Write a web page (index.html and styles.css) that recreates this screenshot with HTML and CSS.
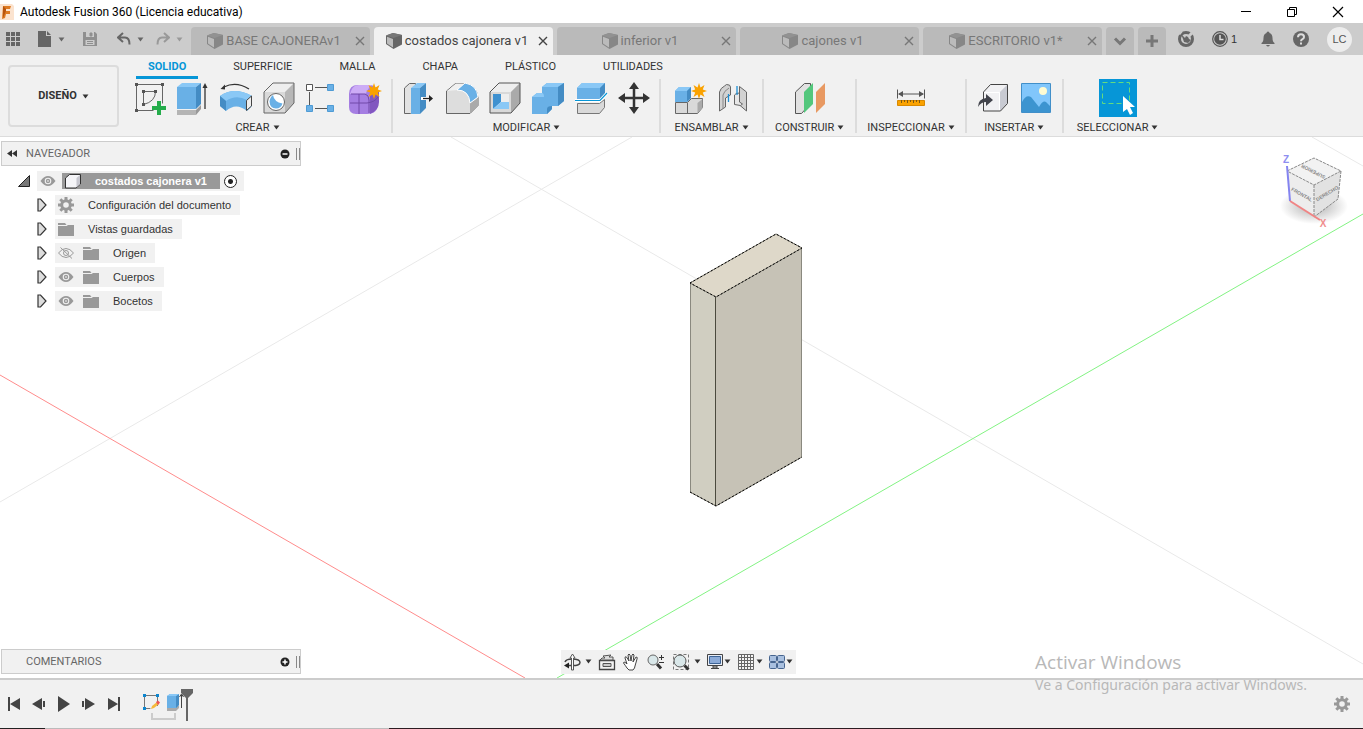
FILE: index.html
```html
<!DOCTYPE html>
<html lang="es">
<head>
<meta charset="utf-8">
<title>Autodesk Fusion 360 (Licencia educativa)</title>
<link rel="stylesheet" href="styles.css">
</head>
<body>
<svg class="defs" aria-hidden="true">
  <defs>
    <symbol id="caret" viewBox="0 0 8 6"><path d="M0.5 0.5h7L4 5.5z" fill="currentColor"/></symbol>
    <symbol id="doc" viewBox="0 0 16 16"><path d="M0 2.500L7 0l9 2v9.500L7.500 16L0 11z" fill="#666"/><path d="M0 2.500L7 0l9 2-8.500 3z" fill="#787878"/><path d="M1 3.800L7 6v8.500L1 10.500z" fill="#bcbcbc"/></symbol>
    <symbol id="close" viewBox="0 0 10 10"><path d="M1 1l8 8M9 1l-8 8" stroke="currentColor" stroke-width="1.4"/></symbol>
    <symbol id="eye" viewBox="0 0 16 12"><path d="M0.5 6Q4 1 8 1t7.500 5Q12 11 8 11T0.500 6z" fill="#999"/><circle cx="8" cy="6" r="3.300" fill="#f1f1f1"/><circle cx="8" cy="6" r="2.200" fill="#999"/><circle cx="8" cy="6" r="0.900" fill="#ddd"/></symbol>
    <symbol id="eyeoff" viewBox="0 0 16 12"><path d="M0.500 6Q4 1.500 8 1.500t7.500 4.500Q12 10.500 8 10.500T0.500 6z" fill="none" stroke="#999"/><circle cx="8" cy="6" r="2.500" fill="none" stroke="#999"/><path d="M2.500 0.500l11.500 11" stroke="#999"/></symbol>
    <symbol id="folder" viewBox="0 0 16 13"><path d="M0 0h7l1.500 2H0zM0 3h8.500l1.500-1H16v11H0z" fill="#999"/></symbol>
    <symbol id="gear" viewBox="0 0 16 16"><circle cx="8" cy="8" r="4.300" fill="none" stroke="#999" stroke-width="3"/><path d="M8 0v3.500M8 12.500V16M0 8h3.500M12.500 8H16M2.300 2.300l2.500 2.500M11.200 11.200l2.500 2.500M2.300 13.700l2.500-2.500M11.200 4.800l2.500-2.500" stroke="#999" stroke-width="3"/></symbol>
    <symbol id="expand" viewBox="0 0 10 14"><path d="M1 1h2.500L9 7l-5.500 6H1z" fill="#ddd" stroke="#333" stroke-width="1.200"/></symbol>
    <symbol id="star" viewBox="0 0 16 16"><path d="M8 0l1.500 4.500L13.500 2l-1.700 4.500L16 8l-4.200 1.500L13.500 14l-4-2.500L8 16l-1.500-4.500L2.500 14l1.700-4.500L0 8l4.200-1.500L2.500 2l4 2.500z" fill="#faa200"/></symbol>
  </defs>
</svg>

<header class="titlebar">
  <svg class="logo" viewBox="0 0 14 16"><path d="M0 0h12l2 2v14H0z" fill="#fbe3cf"/><path d="M3 2h8l-1 3H6v2h4v3H6l-1 4-3 1z" fill="#dd7a22"/><path d="M3 2l3 3v2l-3 7z" fill="#b8540d"/></svg>
  <h1>Autodesk Fusion 360 (Licencia educativa)</h1>
  <div class="window-controls">
    <button aria-label="Minimizar"><svg width="12" height="12"><path d="M1 5.500h10" stroke="#000"/></svg></button>
    <button aria-label="Restaurar"><svg width="12" height="12"><path d="M1.500 3.500h7v7h-7zM3.500 3V1.500h7v7H9" fill="none" stroke="#000"/></svg></button>
    <button aria-label="Cerrar"><svg width="12" height="12"><path d="M1 1l10 10M11 1L1 11" stroke="#000" stroke-width="1.200"/></svg></button>
  </div>
</header>

<div class="filebar">
  <div class="quick">
    <button aria-label="Panel de datos"><svg width="16" height="16"><path d="M1 1h4v4H1zM6 1h4v4H6zM11 1h4v4h-4zM1 6h4v4H1zM6 6h4v4H6zM11 6h4v4h-4zM1 11h4v4H1zM6 11h4v4H6zM11 11h4v4h-4z" fill="#666"/></svg></button>
    <button class="pair" aria-label="Archivo"><svg width="14" height="16"><path d="M0 0h8v5h5v11H0zM9 0l4 4H9z" fill="#666"/></svg><svg class="caret"><use href="#caret"/></svg></button>
    <button class="dim" aria-label="Guardar"><svg width="16" height="16"><path d="M1 1h12l2 2v12H1z" fill="#8f8f8f"/><path d="M4 1h8v5H4zM3.500 9h9v5h-9z" fill="#ccc"/><path d="M8 2h2v3H8zM5 10.500h6M5 12.500h6" fill="#8f8f8f" stroke="#8f8f8f"/></svg></button>
    <button class="pair" aria-label="Deshacer"><svg width="14" height="14"><path d="M6 1L1 5.500L6 10M1.500 5.500H8q4.500 0 4.500 7" fill="none" stroke="#666" stroke-width="2"/></svg><svg class="caret"><use href="#caret"/></svg></button>
    <button class="pair dim" aria-label="Rehacer"><svg width="14" height="14"><path d="M8 1l5 4.500L8 10M12.500 5.500H6q-4.500 0-4.500 7" fill="none" stroke="#999" stroke-width="2"/></svg><svg class="caret"><use href="#caret"/></svg></button>
  </div>
  <nav class="files" aria-label="Documentos">
    <div class="file"><a href="#"><svg class="doc"><use href="#doc"/></svg>BASE CAJONERAv1</a><button aria-label="Cerrar BASE CAJONERA"><svg class="x"><use href="#close"/></svg></button></div>
    <div class="file active"><a href="#"><svg class="doc"><use href="#doc"/></svg>costados cajonera v1</a><button aria-label="Cerrar costados cajonera"><svg class="x"><use href="#close"/></svg></button></div>
    <div class="file"><a href="#"><svg class="doc"><use href="#doc"/></svg>inferior v1</a><button aria-label="Cerrar inferior"><svg class="x"><use href="#close"/></svg></button></div>
    <div class="file"><a href="#"><svg class="doc"><use href="#doc"/></svg>cajones v1</a><button aria-label="Cerrar cajones"><svg class="x"><use href="#close"/></svg></button></div>
    <div class="file"><a href="#"><svg class="doc"><use href="#doc"/></svg>ESCRITORIO v1*</a><button aria-label="Cerrar ESCRITORIO"><svg class="x"><use href="#close"/></svg></button></div>
    <button class="tabbtn" aria-label="Más documentos"><svg width="14" height="14"><path d="M2 4.500l5 5 5-5" fill="none" stroke="#777" stroke-width="3"/></svg></button>
    <button class="tabbtn" aria-label="Nuevo diseño"><svg width="14" height="14"><path d="M7 1v12M1 7h12" stroke="#777" stroke-width="3"/></svg></button>
  </nav>
  <div class="account">
    <button aria-label="Extensiones"><svg width="16" height="16"><circle cx="8" cy="8" r="6.500" fill="#ccc" stroke="#666" stroke-width="3"/><path d="M14 2l-4 4" stroke="#ccc" stroke-width="3"/><path d="M3 3l4 4 1-2 2 1 1 2 2 1-3 3-4-1-1-3z" fill="#666"/><path d="M4 0.500L1.500 3.500" stroke="#ccc" stroke-width="1.500"/></svg></button>
    <button class="jobs"><svg width="16" height="16"><circle cx="8" cy="8" r="7.300" fill="#ccc" stroke="#555" stroke-width="1.200"/><circle cx="8" cy="8" r="5.800" fill="#555"/><path d="M8 4v4.500h3.500" fill="none" stroke="#ddd" stroke-width="1.500"/></svg>1</button>
    <button class="bell" aria-label="Notificaciones"><svg width="14" height="16"><path d="M7 0.500q1.500 0 1.500 1.500Q11.500 3 11.500 7q0 4 2 5v1h-13v-1q2-1 2-5 0-4 3-5Q5.500 0.500 7 0.500zM5 14h4q-2 3-4 0z" fill="#666"/></svg></button>
    <button aria-label="Ayuda"><svg width="16" height="16"><circle cx="8" cy="8" r="8" fill="#666"/><path d="M5 6.200q0-3 3-3t3 2.700q0 1.500-1.500 2.300T8 10.300M8 11.500v2" fill="none" stroke="#ddd" stroke-width="2"/></svg></button>
    <button class="avatar">LC</button>
  </div>
</div>

<section class="ribbon">
  <button class="workspace">DISEÑO <svg class="caret"><use href="#caret"/></svg></button>
  <div class="ribbon-main">
    <nav class="ribbon-tabs">
      <a class="current" href="#">SOLIDO</a><a href="#">SUPERFICIE</a><a href="#">MALLA</a><a href="#">CHAPA</a><a href="#">PLÁSTICO</a><a href="#">UTILIDADES</a>
    </nav>
    <div class="groups">
      <div class="group create">
        <div class="tools">
          <button aria-label="Crear boceto"><svg class="tool" viewBox="0 0 32 32"><path d="M2.500 2.500h26M2.500 2.500v26h17M28.500 2.500v19" fill="none" stroke="#666"/><path d="M9.500 9.500h12M9.500 9.500v12M21.500 9.500q0 10-12 13" fill="none" stroke="#666"/><path d="M1 1h3v3H1zM27 1h3v3h-3zM1 27h3v3H1zM8 8h3v3H8zM20 8h3v3h-3zM8 21h3v3H8z" fill="#555"/><path d="M23 19h4v5h5v4h-5v5h-4v-5h-5v-4h5z" fill="#24ac4b"/></svg></button>
          <button aria-label="Extruir"><svg class="tool" viewBox="0 0 32 32"><path d="M0 28h19l5-5v4l-5 6H0z" fill="#999"/><path d="M0 28h19v5H0z" fill="#b5b5b5"/><path d="M0 5h19v22H0z" fill="#69b0e6"/><path d="M0 5l5-4h19l-5 4z" fill="#8ac8f6"/><path d="M19 5l5-4v21l-5 5z" fill="#448cc4"/><path d="M28 27V4" stroke="#333" stroke-width="1.300"/><path d="M25.500 6L28 1l2.500 5z" fill="#333"/></svg></button>
          <button aria-label="Revolución"><svg class="tool" viewBox="0 0 32 32"><path d="M0 14Q14 4 32 14v10l-5 5Q16 20 6 29L0 24z" fill="#69b0e6"/><path d="M0 14Q14 4 32 14l-5 4Q16 12 6 19z" fill="#8ac8f6"/><path d="M0 14l6 5v10l-6-5z" fill="#448cc4"/><path d="M26.500 18.500L31.500 14v10l-5 4.500z" fill="#eee" stroke="#444"/><path d="M4 5Q16-1 29 7" fill="none" stroke="#333" stroke-width="1.300"/><path d="M0.500 7L5 2.500v5z" fill="#333"/></svg></button>
          <button aria-label="Agujero"><svg class="tool" viewBox="0 0 32 32"><path d="M1 10L10 1h21l-9 9z" fill="#eee"/><path d="M22 10l9-9v20l-9 10z" fill="#b7b7b7"/><path d="M1 10h21v21H1z" fill="#d9d9d9"/><path d="M1 10L10 1h21v20l-9 10H1z" fill="none" stroke="#666"/><circle cx="13" cy="20" r="8.500" fill="#fff" stroke="#666"/><path d="M10 13q1 7 9.500 8.500-1.500 5-6.500 5-6 0-6.500-7Q7 15 10 13z" fill="#69b0e6"/></svg></button>
          <button aria-label="Patrón rectangular"><svg class="tool" viewBox="0 0 32 32"><path d="M9 5.500h12M3.500 10v13M9 26.500h12" stroke="#555"/><path d="M0.500 2.500h6v6h-6z" fill="#fff" stroke="#555"/><path d="M21.500 2.500h6v6h-6zM0.500 23.500h6v6h-6zM21.500 23.500h6v6h-6z" fill="#69b0e6" stroke="#4f9bd4"/></svg></button>
          <button aria-label="Crear forma"><svg class="tool" viewBox="0 0 32 32"><path d="M0 12q0-9 9-9h11q8 0 9 8v10q0 11-11 11H7q-7 0-7-7z" fill="#a57ee2"/><path d="M2 9q2-6 8-6h12l-4 6q-1 3-2 3H1z" fill="#ccacf6"/><path d="M21 11l9-3v12q0 8-9 12z" fill="#8257c0"/><path d="M1 21h17q8-1 11-6M10 12v20M2 12h14q4 1 4 6v13" fill="none" stroke="#7049a8"/></svg><svg class="spark"><use href="#star"/></svg></button>
        </div>
        <button class="group-label">CREAR<svg class="caret"><use href="#caret"/></svg></button>
      </div>
      <div class="group modify">
        <div class="tools">
          <button aria-label="Pulsar/tirar"><svg class="tool" viewBox="0 0 32 32"><path d="M1.500 6l5-4.500h6v25l-5 5h-6z" fill="#e2e2e2" stroke="#666"/><path d="M8 6h9v26H8z" fill="#69b0e6"/><path d="M8 6l6-5h9l-6 5z" fill="#8ac8f6"/><path d="M17 6l6-5v25l-6 6z" fill="#448cc4"/><path d="M18 16.500h9" stroke="#fff" stroke-width="3"/><path d="M20 16.500h7" stroke="#222" stroke-width="1.300"/><path d="M26 13l4 3.500-4 3.500z" fill="#222"/></svg></button>
          <button aria-label="Empalme"><svg class="tool" viewBox="0 0 32 32"><path d="M0.500 9l9-7.500H19q12 2 13 14v8l-8 8H0.500z" fill="#ddd" stroke="#666"/><path d="M1 9l9-7.500h9L12 8z" fill="#f0f0f0"/><path d="M24 21l8-5v8l-8 7z" fill="#aaa"/><path d="M11 8l8-7q12 2 13 14l-8 6Q23 8 11 8z" fill="#69b0e6" stroke="#fff"/></svg></button>
          <button aria-label="Vaciado"><svg class="tool" viewBox="0 0 32 32"><path d="M1 10L10 1h21v20L22 31H1z" fill="#d9d9d9"/><path d="M1 10L10 1h21l-9 9z" fill="#eee"/><path d="M22 10l9-9v20L22 31z" fill="#aaa"/><path d="M1 10L10 1h21v20L22 31H1z" fill="none" stroke="#555"/><path d="M4 12h16v15H4z" fill="#eee"/><path d="M4 12h8v8l-8 7z" fill="#3f91d0"/><path d="M12 20h8v7H4z" fill="#8ac8f6"/></svg></button>
          <button aria-label="Combinar"><svg class="tool" viewBox="0 0 32 32"><path d="M0 15l5-4h5V5l5-4h17v18l-6 5h-6v3l-5 5H0z" fill="#69b0e6"/><path d="M0 15l5-4h5q2 0 2 4zM10 5l5-4h17l-6 4z" fill="#8ac8f6"/><path d="M26 5l6-4v18l-6 5zM20 24v3l-5 5v-5q0-3 5-3z" fill="#448cc4"/></svg></button>
          <button aria-label="Dividir cuerpo"><svg class="tool" viewBox="0 0 32 32"><path d="M2 6l5-5h23v11l-5 5H2z" fill="#69b0e6"/><path d="M2 6l5-5h23l-5 5z" fill="#8ac8f6"/><path d="M25 6l5-5v11l-5 5z" fill="#448cc4"/><path d="M2.500 21.500h22l5-4v8l-5 6h-22z" fill="#d9d9d9" stroke="#777"/><path d="M0 18.500h25L32 11" fill="none" stroke="#fff" stroke-width="3"/><path d="M0 18.500h25L32 11" fill="none" stroke="#0696d7" stroke-width="1.200"/></svg></button>
          <button aria-label="Desplazar/Copiar"><svg class="tool" viewBox="0 0 32 32"><path d="M16 4v24M4 16h24" stroke="#333" stroke-width="2.500"/><path d="M16 0l5 7H11zM16 32l5-7H11zM0 16l7-5v10zM32 16l-7-5v10z" fill="#333"/></svg></button>
        </div>
        <button class="group-label">MODIFICAR<svg class="caret"><use href="#caret"/></svg></button>
      </div>
      <div class="group assemble">
        <div class="tools">
          <button aria-label="Nuevo componente"><svg class="tool" viewBox="0 0 32 32"><path d="M1.500 20.500h12l4-4h11v9l-5 6h-22z" fill="#d9d9d9" stroke="#666"/><path d="M23.500 21l5-4v9l-5 5z" fill="#aaa"/><path d="M13.500 21v10" stroke="#666"/><path d="M1 9l4-4h12v11l-4 4H1z" fill="#69b0e6"/><path d="M1 9l4-4h12l-4 4z" fill="#8ac8f6"/><path d="M13 9l4-4v11l-4 4z" fill="#448cc4"/></svg><svg class="spark"><use href="#star"/></svg></button>
          <button aria-label="Unión"><svg class="tool" viewBox="0 0 32 32"><path d="M2.500 29V10q1-4 5-6l2-1.500q4 0 4 2.500v8l-5 3v9z" fill="#d2d2d2" stroke="#666"/><path d="M6 27V13q1-4 6-7" fill="none" stroke="#888"/><path d="M22.500 4.500l7 5.500v19l-7-6z" fill="#d2d2d2" stroke="#666"/><path d="M17.500 13q1-2 5-2v9l3 2-2 1.500-6-1z" fill="#e8e8e8" stroke="#666"/><path d="M11.500 12v8M20 4v9" stroke="#1d8fd4" stroke-width="1.300"/></svg></button>
        </div>
        <button class="group-label">ENSAMBLAR<svg class="caret"><use href="#caret"/></svg></button>
      </div>
      <div class="group construct">
        <div class="tools"><button aria-label="Plano de desfase"><svg class="tool" viewBox="0 0 32 32"><path d="M1.500 10l9-8.500h6v20l-9 10h-6z" fill="#e1e1e1" stroke="#555"/><path d="M10 10l9-9v21l-9 9z" fill="#53c77c"/><path d="M22 10l9-9v21l-9 9z" fill="#e89962"/></svg></button></div>
        <button class="group-label">CONSTRUIR<svg class="caret"><use href="#caret"/></svg></button>
      </div>
      <div class="group inspect">
        <div class="tools"><button aria-label="Medir"><svg class="tool" viewBox="0 0 32 32"><path d="M2.500 7.500v9M29.500 7.500v9M4 12h24" stroke="#555"/><path d="M3 12l5-3v6zM29 12l-5-3v6z" fill="#555"/><path d="M2.500 18.500h27v5h-27z" fill="#faa200" stroke="#d98900"/><path d="M6.500 18v3M9.500 18v2M12.500 18v3M15.500 18v2M18.500 18v3M21.500 18v2M24.500 18v3" stroke="#7b5712"/></svg></button></div>
        <button class="group-label">INSPECCIONAR<svg class="caret"><use href="#caret"/></svg></button>
      </div>
      <div class="group insert">
        <div class="tools">
          <button aria-label="Insertar derivado"><svg class="tool" viewBox="0 0 32 32"><path d="M6.500 10l7-7.500h17v19l-7 7.500h-17z" fill="#f1f1f3"/><path d="M23 10l7-7v19l-7 7z" fill="#c8cad2"/><path d="M6.500 10l7-7.500h17v19l-7 7.500h-17z" fill="none" stroke="#444"/><path d="M7 10.500h15.500V28" fill="none" stroke="#fff"/><path d="M1 25q0-8 8-9v-4l7 6-7 6v-4q-5 0-8 5z" fill="#42444c"/></svg></button>
          <button aria-label="Insertar imagen"><svg class="tool" viewBox="0 0 32 32"><path d="M2 2h28v28H2z" fill="#81c6fb"/><circle cx="23" cy="9" r="4" fill="#fffbd2"/><path d="M2 20q4-8 9-5l8 10q4-7 7-5l4 4v6H2z" fill="#3c94d0"/><path d="M1.500 1.500h29v29h-29z" fill="none" stroke="#418fc9"/></svg></button>
        </div>
        <button class="group-label">INSERTAR<svg class="caret"><use href="#caret"/></svg></button>
      </div>
      <div class="group select">
        <div class="tools"><button class="select-tool" aria-label="Seleccionar"><svg width="38" height="38"><path d="M3.500 3.500h27v21h-27z" fill="none" stroke="#65db7e" stroke-dasharray="5 3"/><path d="M24 17v16l4-3 3 6 3-2-3-6h5z" fill="#fff"/></svg></button></div>
        <button class="group-label">SELECCIONAR<svg class="caret"><use href="#caret"/></svg></button>
      </div>
    </div>
  </div>
</section>

<main class="canvas">
  <svg class="scene" viewBox="0 137 1363 541" preserveAspectRatio="xMidYMid slice" aria-hidden="true">
    <g stroke="#e9e9e9"><path d="M0 502L632 137M451 137L1363 664M1312 137L1363 166"/></g>
    <path d="M0 375L525 678" stroke="#ff8c8c"/>
    <path d="M557 678L1363 214" stroke="#83f383"/>
    <path d="M690 283L776 234L802 248L716 297z" fill="#ded8c9"/>
    <path d="M690 283L716 297V506L690 492z" fill="#d0cec1"/>
    <path d="M716 297L802 248V457L716 506z" fill="#c6c2b6"/>
    <path d="M690.500 283V492M801.500 248V457" stroke="#8a897f"/>
    <path d="M715.500 297V506" stroke="#4b4a3e"/>
    <g fill="none" stroke="#77756b"><path d="M690 283L776 234L802 248L716 297zM690 492L716 506L802 457"/></g>
    <g fill="none" stroke="#000" stroke-dasharray="2 2"><path d="M690 283L776 234L802 248L716 297zM690 492L716 506L802 457"/></g>
  </svg>

  <div class="canvas-top">
    <aside class="browser">
      <div class="panel-head">
        <svg width="10" height="7"><path d="M0 3.500L5 0v7zM5 3.500L10 0v7z" fill="#333"/></svg>
        <h2>NAVEGADOR</h2>
        <button aria-label="Contraer"><svg width="10" height="10"><circle cx="5" cy="5" r="4.500" fill="#222"/><path d="M2.500 5h5" stroke="#fff" stroke-width="1.500"/></svg></button>
        <span class="grip"></span>
      </div>
      <ul class="tree">
        <li class="root">
          <svg class="open" viewBox="0 0 12 12"><path d="M0.500 11.500L11.500 0.500v11z" fill="#777" stroke="#222"/></svg>
          <div class="chip">
            <svg class="eye"><use href="#eye"/></svg>
            <span class="selected"><svg width="18" height="16"><path d="M1.500 5l4-3.500h11V11L12 15H1.500z" fill="#f5f5f8" stroke="#333"/><path d="M12.500 5l3.500-3v9l-3.500 3.500z" fill="#c8c8d0"/></svg><b>costados cajonera v1</b></span>
            <input type="radio" class="activate" aria-label="Activar componente" checked>
          </div>
        </li>
        <li><svg class="arrow"><use href="#expand"/></svg><div class="chip"><svg class="gear"><use href="#gear"/></svg><span>Configuración del documento</span></div></li>
        <li><svg class="arrow"><use href="#expand"/></svg><div class="chip"><svg class="folder"><use href="#folder"/></svg><span>Vistas guardadas</span></div></li>
        <li><svg class="arrow"><use href="#expand"/></svg><div class="chip"><svg class="eye"><use href="#eyeoff"/></svg><svg class="folder"><use href="#folder"/></svg><span>Origen</span></div></li>
        <li><svg class="arrow"><use href="#expand"/></svg><div class="chip"><svg class="eye"><use href="#eye"/></svg><svg class="folder"><use href="#folder"/></svg><span>Cuerpos</span></div></li>
        <li><svg class="arrow"><use href="#expand"/></svg><div class="chip"><svg class="eye"><use href="#eye"/></svg><svg class="folder"><use href="#folder"/></svg><span>Bocetos</span></div></li>
      </ul>
    </aside>
    <svg class="viewcube" viewBox="1275 148 80 84">
      <defs><radialGradient id="shade"><stop offset="0" stop-color="#999" stop-opacity="0.800"/><stop offset="1" stop-color="#999" stop-opacity="0"/></radialGradient></defs>
      <ellipse cx="1314" cy="206" rx="34" ry="18" fill="url(#shade)"/>
      <path d="M1287 171L1314 158L1341 171L1314 185z" fill="#f2f2f2"/>
      <path d="M1287 171L1314 185V217L1290 201z" fill="#ededed"/>
      <path d="M1314 185L1341 171L1338 199L1314 217z" fill="#e2e2e2"/>
      <path d="M1287 171L1314 158L1341 171L1314 185zM1314 185V217M1341 171L1338 199L1314 217" fill="none" stroke="#888" stroke-dasharray="3 1"/>
      <path d="M1287 166L1290 201" stroke="#8484f0" stroke-width="2"/>
      <path d="M1290 201L1320 220" stroke="#f08484" stroke-width="2"/>
      <text class="face" transform="translate(1301 196) rotate(29)">FRONTAL</text>
      <text class="face" transform="translate(1328 195) rotate(-31)">DERECHO</text>
      <text class="face" transform="translate(1314 170) rotate(207)">SUPERIOR</text>
      <text class="axis z" x="1286" y="163">Z</text>
      <text class="axis x-axis" x="1323" y="227">X</text>
    </svg>
  </div>

  <div class="canvas-bottom">
    <aside class="panel-head comments">
      <h2>COMENTARIOS</h2>
      <button aria-label="Añadir comentario"><svg width="10" height="10"><circle cx="5" cy="5" r="4.500" fill="#222"/><path d="M2.500 5h5M5 2.500v5" stroke="#fff" stroke-width="1.500"/></svg></button>
      <span class="grip"></span>
    </aside>
    <div class="navbar">
      <button class="orbit" aria-label="Órbita"><svg width="18" height="18"><path d="M2 9q1-3 7-3 8 0 8 3.500T8 12.500H4" fill="none" stroke="#444" stroke-width="1.500"/><path d="M8.500 17V5H7l2.500-4L12 5h-1.500v12z" fill="#fff" stroke="#555"/><path d="M1 12.500l5-3v6z" fill="#222"/></svg><svg class="caret"><use href="#caret"/></svg></button>
      <button aria-label="Mirar a"><svg width="18" height="18"><path d="M1.500 7.500h15v9h-15z" fill="#f2f2f2" stroke="#444" stroke-width="1.300"/><path d="M2 7l2-2 3 0-2-2 8-1-2 2 4 0v3z" fill="#ddd" stroke="#555"/><path d="M5 10.500h8v3H5z" fill="#ccc" stroke="#555"/></svg></button>
      <button aria-label="Encuadre"><svg width="18" height="18"><path d="M5 15Q3 12 1.500 10q0-2 2.500 0l1 1L3 5q0-2 1.500-1L7 8 6 2q1-2 2 0l1 6 1-6q1-2 2 0l-1 7 3-5q2 0 1 2l-2 7q0 2-2 4H7z" fill="#fff" stroke="#444"/></svg></button>
      <button aria-label="Zoom"><svg width="20" height="18"><circle cx="7" cy="7" r="5" fill="#d9e7e9" stroke="#666"/><path d="M11 11l4 4.500" stroke="#333" stroke-width="3"/><path d="M13 4.500h5M15.500 2v5M13 9.500h5" stroke="#333"/></svg></button>
      <button class="fit" aria-label="Ajustar"><svg width="18" height="18"><path d="M1.500 1.500h15v15h-15z" fill="none" stroke="#777" stroke-dasharray="3 2"/><circle cx="8" cy="8" r="6" fill="#d9e7e9" stroke="#555"/><path d="M12.500 12.500l4 4" stroke="#333" stroke-width="3"/></svg><svg class="caret"><use href="#caret"/></svg></button>
      <button aria-label="Visualización"><svg width="16" height="18"><path d="M0.500 1.500h15v11h-15z" fill="#e8edf6" stroke="#444"/><path d="M2.500 3.500h11v7h-11z" fill="#8cabd8" stroke="#3d6496"/><path d="M6 13h4v2H6zM4 15.500h8" fill="#ccc" stroke="#444"/></svg><svg class="caret"><use href="#caret"/></svg></button>
      <button aria-label="Rejilla"><svg width="18" height="18"><path d="M1.500 1.500h15v15h-15zM4.500 2v15M7.500 2v15M10.500 2v15M13.500 2v15M2 4.500h15M2 7.500h15M2 10.500h15M2 13.500h15" fill="#f5f5f5" stroke="#666"/></svg><svg class="caret"><use href="#caret"/></svg></button>
      <button aria-label="Ventanas"><svg width="16" height="18"><rect x="0.500" y="2.500" width="7" height="6" rx="1"/><rect x="8.500" y="2.500" width="7" height="6" rx="1"/><rect x="0.500" y="9.500" width="7" height="6" rx="1"/><rect x="8.500" y="9.500" width="7" height="6" rx="1"/></svg><svg class="caret"><use href="#caret"/></svg></button>
    </div>
  </div>
</main>

<footer class="timeline">
  <div class="player">
    <button aria-label="Inicio"><svg width="14" height="14"><path d="M1 0h2v14H1zM13 1v12L3 7z" fill="#444"/></svg></button>
    <button aria-label="Paso atrás"><svg width="14" height="14"><path d="M10 1v12L0 7zM11 4h2v6h-2z" fill="#444"/></svg></button>
    <button aria-label="Reproducir"><svg width="14" height="16"><path d="M1 0v16l12-8z" fill="#444"/></svg></button>
    <button aria-label="Paso adelante"><svg width="14" height="14"><path d="M3 1v12l10-6zM0 4h2v6H0z" fill="#444"/></svg></button>
    <button aria-label="Final"><svg width="14" height="14"><path d="M11 0h2v14h-2zM1 1v12l10-6z" fill="#444"/></svg></button>
  </div>
  <svg class="history" viewBox="0 0 54 34" role="img" aria-label="Boceto y extrusión">
    <path d="M2.500 8.500h13v13h-13z" fill="none" stroke="#777"/><path d="M1 7h3v3H1zM14 7h3v3h-3zM1 20h3v3H1z" fill="#0d86cf"/>
    <path d="M9 19h8v4H8z" fill="#f1f1f1"/><path d="M9 22l1-3 5-4 2 2-5 4z" fill="#f5b93c"/><path d="M14 15l2-1.500 2 2L16 18z" fill="#ec5555"/>
    <path d="M25 21l3-2h9v2l-3 3h-9z" fill="#aaa"/><path d="M25 9l3-2h9v11l-3 3h-9z" fill="#69b0e6"/><path d="M34 9l3-2v11l-3 3z" fill="#448cc4"/><path d="M25 9l3-2h9l-3 2z" fill="#8ac8f6"/><path d="M39.500 21V8M37.500 10l2-3 2 3" fill="none" stroke="#444"/>
    <path d="M10 26v6h23v-6" fill="none" stroke="#ccc" stroke-width="2"/>
    <path d="M39 2h12v4l-5 5v23h-2V11l-5-5z" fill="#666"/>
  </svg>
  <button class="prefs" aria-label="Configuración"><svg class="gear"><use href="#gear"/></svg></button>
</footer>
<div class="taskbar-edge"></div>

<div class="watermark"><p class="wm-title">Activar Windows</p><p>Ve a Configuración para activar Windows.</p></div>
</body>
</html>
```
FILE: styles.css
```css
* { box-sizing: border-box; }
html, body { height: 100%; }
body {
  margin: 0;
  display: flex;
  flex-direction: column;
  position: relative;
  overflow: hidden;
  background: #fff;
  color: #333;
  font: 11px/16px "Liberation Sans", Arial, sans-serif;
}
button { margin: 0; padding: 0; border: 0; background: none; color: inherit; font: inherit; display: flex; align-items: center; justify-content: center; }
a { color: inherit; text-decoration: none; }
h1, h2, p, ul { margin: 0; padding: 0; font-weight: normal; }
ul { list-style: none; }
svg { display: block; flex: none; }
.defs { position: absolute; width: 0; height: 0; }
.caret { width: 7px; height: 5px; }

/* Window title */
.titlebar { height: 23px; display: flex; align-items: center; flex: none; }
.logo { width: 14px; height: 16px; }
.titlebar h1 { margin-left: 6px; font: 12px/16px Roboto, "Noto Sans", sans-serif; color: #000; white-space: nowrap; }
.window-controls { margin-left: auto; margin-right: 2px; display: flex; }
.window-controls button { width: 46px; height: 20px; }

/* Document tabs */
.filebar { height: 32px; flex: none; display: flex; background: #ccc; }
.quick { width: 191px; flex: none; display: flex; align-items: center; gap: 17px; padding-left: 5px; color: #666; }
.quick .pair { gap: 6px; }
.quick .dim { color: #999; }
.quick .dim + .pair { margin-left: 2px; }
.quick .pair + .pair { margin-left: -5px; }
.files { display: flex; align-items: flex-end; gap: 4px; flex: 0 1 auto; }
.file, .tabbtn { height: 28px; background: #bababa; border-radius: 4px 4px 0 0; }
.file { width: 179px; display: flex; align-items: center; padding-left: 8px; color: #777; font-family: Roboto, "Liberation Sans", sans-serif; font-size: 13px; }
.file a { flex: 1; display: flex; justify-content: center; align-items: center; gap: 3px; white-space: nowrap; }
.file button { width: 21px; height: 28px; }
.file.active { background: #f1f1f1; color: #444; }
.file .doc { width: 16px; height: 16px; opacity: 0.6; }
.file.active .doc { opacity: 1; }
.x { width: 10px; height: 10px; }
.tabbtn { width: 28px; }
.account { margin-left: auto; padding-right: 11px; display: flex; align-items: center; gap: 18px; }
.jobs { gap: 3px; }
.bell { margin-left: 6px; }
.avatar { width: 25px; height: 25px; border-radius: 50%; background: #ededed; color: #555; }

/* Ribbon */
.ribbon { flex: none; height: 82px; display: flex; background: #f1f1f1; border-bottom: 1px solid #dcdcdc; font-family: Roboto, "Liberation Sans", sans-serif; }
.workspace { width: 111px; height: 62px; margin: 10px 10px 0 8px; border: 2px solid #dcdcdc; border-radius: 4px; font-weight: bold; gap: 5px; }
.ribbon-main { flex: 1; }
.ribbon-tabs { display: flex; gap: 23px; padding-left: 7px; height: 24px; }
.ribbon-tabs a { padding: 4px 12px 0; white-space: nowrap; }
.ribbon-tabs .current { color: #0696d7; font-weight: bold; border-bottom: 3px solid #0696d7; }
.groups { display: flex; }
.group { padding: 0 13px; display: flex; flex-direction: column; align-items: center; border-right: 2px solid #dcdcdc; height: 54px; }
.group.create { padding: 0 10px 0 5px; }
.group.modify { padding: 0 9px 0 10px; }
.group.construct { padding: 0 11px; }
.group.inspect, .group.insert { padding: 0 10px; }
.group.select { border-right: 0; }
.tools { flex: none; display: flex; align-items: center; gap: 11px; height: 38px; }
.tools button { position: relative; }
.tool { width: 32px; height: 32px; overflow: visible; }
.spark { position: absolute; top: 1px; right: -1px; width: 16px; height: 16px; }
.select-tool { background: #0696d7; }
.group-label { flex: none; gap: 3px; height: 21px; white-space: nowrap; }

/* Modelling canvas */
.canvas { flex: 1; min-height: 0; position: relative; display: flex; flex-direction: column; justify-content: space-between; }
.scene { position: absolute; inset: 0; width: 100%; height: 100%; }
.canvas-top, .canvas-bottom { position: relative; }
.canvas-top { display: flex; justify-content: space-between; align-items: flex-start; padding: 4px 8px 0 1px; }
.panel-head { width: 300px; height: 25px; display: flex; align-items: center; padding-left: 5px; background: #f1f1f1; border: 1px solid #ccc; color: #666; }
.panel-head h2 { flex: 1; font: 11px/16px Roboto, "Liberation Sans", sans-serif; margin-left: 9px; }
.grip { width: 4px; height: 12px; margin: 0 0 0 6px; border: solid #888; border-width: 0 1px; }
.tree { padding-top: 3px; }
.tree li { height: 24px; display: flex; align-items: center; padding-left: 36px; }
.tree .root { padding-left: 17px; }
.open { width: 12px; height: 12px; }
.arrow { width: 10px; height: 14px; margin-right: 8px; }
.chip { height: 20px; display: flex; align-items: center; background: #f1f1f1; padding: 0 9px 0 3px; white-space: nowrap; }
.root .chip { margin-left: 7px; padding: 0 7px 0 3px; }
.eye { width: 16px; height: 12px; }
.gear { width: 16px; height: 16px; }
.folder { width: 16px; height: 13px; }
.eye + .folder { margin-left: 9px; }
.chip > span { margin-left: 14px; }
.chip > .selected { margin-left: 6px; height: 16px; padding: 0 13px 0 2px; display: flex; align-items: center; gap: 13px; background: #999; color: #fff; }
.activate { appearance: none; width: 13px; height: 13px; margin: 0 0 0 4px; border: 1px solid #222; border-radius: 50%; background: radial-gradient(circle, #222 0 2px, #fff 3px); }
.viewcube { width: 80px; height: 84px; margin-top: 7px; }
.face { font-size: 5px; font-weight: bold; fill: #888; text-anchor: middle; }
.axis { font-size: 10px; font-weight: bold; text-anchor: middle; }
.z { fill: #8e8ef0; }
.x-axis { fill: #f08e8e; }
.canvas-bottom { display: grid; grid-template-columns: 1fr auto 1fr; align-items: center; padding: 0 7px 4px 1px; }
.comments h2 { margin-left: 19px; }
.navbar { height: 24px; display: flex; align-items: center; gap: 6px; padding: 0 3px 0 2px; background: #f1f1f1; }
.navbar button { gap: 1px; }
.navbar .orbit, .navbar .fit { gap: 4px; }
.navbar rect { fill: #a9c0df; stroke: #46658f; }

/* Timeline */
.timeline { flex: none; height: 50px; display: flex; align-items: center; background: #f1f1f1; border-top: 2px solid #ccc; padding: 0 13px 0 7px; }
.player { display: flex; gap: 11px; }
.history { width: 54px; height: 34px; margin-left: 21px; }
.prefs { margin-left: auto; }
.taskbar-edge { flex: none; height: 1px; background: linear-gradient(90deg, #222 45px, #bbb 45px 389px, #2c1c22 389px); }

.watermark { position: absolute; right: 56px; bottom: 34px; color: #b8b8b8; pointer-events: none; font: 14px/20px "Noto Sans", "Open Sans", sans-serif; white-space: nowrap; }
.watermark .wm-title { font: 19px/26px "Open Sans", "Noto Sans", sans-serif; }
```
